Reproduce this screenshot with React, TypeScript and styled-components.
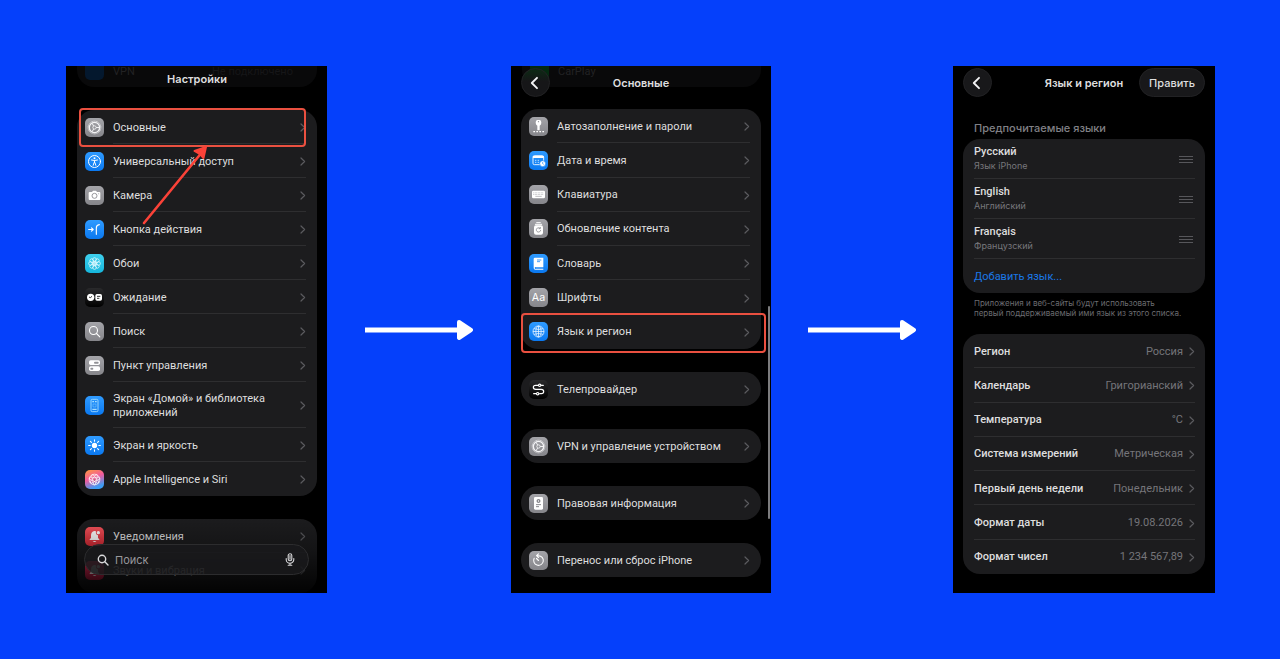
import React from "react";
import styled, { createGlobalStyle } from "styled-components";

const GlobalStyle = createGlobalStyle`
  *, *::before, *::after { box-sizing: border-box; }
  body {
    margin: 0;
    background: #0540fb;
    font-family: Inter, "Liberation Sans", sans-serif;
    -webkit-font-smoothing: antialiased;
  }
`;

const Page = styled.main`
  display: grid;
  grid-template-columns: 261fr 184fr 260fr 182fr 262fr;
  min-height: 100vh;
  padding: 66px 65px 66px 66px;
`;

const Phone = styled.section`
  position: relative;
  display: flex;
  flex-direction: column;
  min-width: 0;
  padding: 0 10px 16px;
  overflow: hidden;
  background: #000;
  color: #dededf;
  font-family: Roboto, sans-serif;
  font-size: 11px;
  line-height: 14px;
`;

const FirstPhone = styled(Phone)`
  padding: 0 10px 0 11px;
`;

const Connector = styled.div`
  display: flex;
  align-items: center;
  justify-content: center;
`;

const PlainHeader = styled.header`
  display: flex;
  justify-content: center;
  height: 44px;
`;

const NavHeader = styled.header`
  display: grid;
  grid-template-columns: 1fr auto 1fr;
  align-items: center;
  height: 43px;
  padding: 2px 0 12px;
`;

const Title = styled.h1`
  position: relative;
  margin: 0;
  font-family: Inter, sans-serif;
  font-size: 11px;
  font-weight: 600;
  line-height: 26px;
`;

const BackButton = styled.button`
  position: relative;
  display: flex;
  align-items: center;
  justify-content: center;
  width: 29px;
  height: 29px;
  padding: 0 2px 0 0;
  border: 1px solid #222224;
  border-radius: 50%;
  background: ${(p: { $tinted?: boolean }) =>
    p.$tinted ? "linear-gradient(#0c2a14, #161618 45%)" : "#18181a"};
`;

const EditButton = styled.button`
  justify-self: end;
  height: 29px;
  padding: 0 9px;
  border: 1px solid #222224;
  border-radius: 15px;
  background: #18181a;
  color: #dededf;
  font: 500 11px/14px Inter, sans-serif;
`;

const GhostCard = styled.div`
  position: absolute;
  top: 0;
  left: 11px;
  right: 10px;
  display: flex;
  gap: 9px;
  height: 21px;
  padding: 0 24px 0 8px;
  border-radius: 0 0 17px 17px;
  background: #09090a;
  color: #222224;
  line-height: 12px;
`;

const GhostValue = styled.span`
  margin-left: auto;
  color: #161618;
`;

const GhostIcon = styled.i`
  width: 19px;
  height: 14px;
  border-radius: 0 0 5px 5px;
  background: ${(p: { $color: string }) => p.$color};
`;

const Card = styled.nav`
  display: flex;
  flex: none;
  flex-direction: column;
  min-height: ${(p: { $min?: number }) => p.$min ?? 34}px;
  border-radius: 17px;
  background: #1c1c1e;

  & + & { margin-top: 23px; }
`;

const FadingCard = styled(Card)`
  flex: 1 0 68px;

  > a { flex-grow: 0; }
`;

const Row = styled.a`
  position: relative;
  display: flex;
  flex: 1 0 ${(p: { $tall?: boolean }) => (p.$tall ? 46 : 34)}px;
  align-items: stretch;
  gap: 9px;
  padding: 0 11px 0 8px;
  color: inherit;
  text-decoration: none;
`;

const RowBody = styled.span`
  display: flex;
  flex: 1;
  align-items: center;
  justify-content: space-between;
  padding-top: 1px;
  box-shadow: inset 0 -1px #2e2e30;

  ${Row}:last-child > & { box-shadow: none; }
`;

const Tile = styled.svg`
  flex: none;
  align-self: center;
  width: 19px;
  height: 19px;
`;

const Highlight = styled.span`
  position: absolute;
  z-index: 1;
  inset: ${(p: { $inset: string }) => p.$inset};
  border: 2px solid #ea5040;
  border-radius: 4px;
`;

const Pointer = styled.svg`
  position: absolute;
  z-index: 2;
  top: 34px;
  left: 62px;
  width: 72px;
  height: 84px;
  pointer-events: none;
`;

const BottomFade = styled.div`
  position: absolute;
  right: 0;
  bottom: 0;
  left: 0;
  height: 76px;
  background: linear-gradient(transparent, rgba(0, 0, 0, 0.3) 45%, rgba(0, 0, 0, 0.9));
  pointer-events: none;
`;

const SearchBar = styled.label`
  position: absolute;
  right: 18px;
  bottom: 18px;
  left: 18px;
  display: flex;
  align-items: center;
  gap: 6px;
  height: 31px;
  padding: 0 13px 0 12px;
  border: 1px solid #2c2c2e;
  border-radius: 16px;
  background: rgba(26, 26, 28, 0.82);

  svg { flex: none; }
`;

const SearchInput = styled.input`
  flex: 1;
  min-width: 0;
  padding: 0;
  border: 0;
  outline: 0;
  background: transparent;
  color: #dededf;
  font: 400 11px/14px Inter, sans-serif;

  &::placeholder { color: #98989c; opacity: 1; }
`;

const ScrollThumb = styled.div`
  position: absolute;
  top: 240px;
  right: 1px;
  width: 2px;
  height: 213px;
  border-radius: 1px;
  background: #7c7c7e;
`;

const SectionLabel = styled.h2`
  margin: 12px 0 4px 11px;
  color: #808086;
  font-family: Inter, sans-serif;
  font-size: 11px;
  font-weight: 500;
  line-height: 14px;
`;

const LanguageList = styled.ul`
  margin: 0;
  padding: 0;
  border-radius: 17px;
  background: #1c1c1e;
  list-style: none;
`;

const Language = styled.li`
  display: flex;
  align-items: center;
  justify-content: space-between;
  height: 40px;
  margin: 0 10px 0 11px;
  padding-right: 2px;
  box-shadow: inset 0 -1px #2e2e30;
  font-weight: 500;

  small {
    display: block;
    color: #77777c;
    font-family: Inter, sans-serif;
    font-size: 9px;
    font-weight: 400;
  }
`;

const AddLanguage = styled.li`
  display: flex;
  height: 34px;
  padding: 1px 0 0 11px;
  align-items: center;

  a { color: #1a78e6; text-decoration: none; }
`;

const Note = styled.p`
  margin: 5px 0 16px 11px;
  color: #6c6c70;
  font-family: Inter, sans-serif;
  font-size: 8px;
  line-height: 10px;
`;

const SettingRow = styled(Row)`
  padding: 0 10px 0 11px;
  font-weight: 500;
`;

const Value = styled.span`
  display: flex;
  align-items: center;
  gap: 6px;
  color: #75757a;
  font-weight: 400;
`;

const Chevron = () => (
  <svg width="6" height="9" viewBox="0 0 6 9" fill="none" stroke="#5b5b5f" strokeWidth="1.2" strokeLinecap="round" strokeLinejoin="round" aria-hidden="true">
    <path d="M1 1l3.6 3.5L1 8" />
  </svg>
);

const BackArrow = () => (
  <svg width="9" height="14" viewBox="0 0 9 14" fill="none" stroke="#f2f2f4" strokeWidth="1.9" strokeLinecap="round" strokeLinejoin="round" aria-hidden="true">
    <path d="M7 1.8L1.8 7 7 12.2" />
  </svg>
);

const Grip = () => (
  <svg width="14" height="9" viewBox="0 0 14 9" stroke="#57575b" aria-hidden="true">
    <path d="M0 1.5h14M0 4.5h14M0 7.5h14" />
  </svg>
);

const Magnifier = () => (
  <svg width="12" height="12" viewBox="0 0 12 12" fill="none" stroke="#d8d8da" strokeWidth="1.4" strokeLinecap="round" aria-hidden="true">
    <circle cx="5" cy="5" r="3.7" />
    <path d="M7.8 7.8l3.2 3.2" />
  </svg>
);

const Microphone = () => (
  <svg width="10" height="13" viewBox="0 0 10 13" fill="none" stroke="#d8d8da" strokeWidth="1.1" strokeLinecap="round" aria-hidden="true">
    <rect x="3.2" y="0.8" width="3.6" height="7" rx="1.8" />
    <path d="M1.2 5.6v.8a3.8 3.8 0 0 0 7.6 0v-.8M5 10.2v2M3.2 12.3h3.6M5 2.6v3.6" />
  </svg>
);

const FlowArrow = () => (
  <svg width="108" height="22" viewBox="0 0 108 22" fill="#fff" aria-hidden="true">
    <path d="M0 8.5h94v5H0z" />
    <path d="M94 3l12 8-12 8z" stroke="#fff" strokeWidth="4" strokeLinejoin="round" />
  </svg>
);

const petals = [0, 45, 90, 135, 180, 225, 270, 315];

const gear = (
  <g fill="none" stroke="#f4f4f6">
    <circle cx="28.5" cy="28.5" r="19" strokeWidth="2.5" strokeDasharray="2.4 1.6" />
    <circle cx="28.5" cy="28.5" r="15.5" strokeWidth="4" />
    <circle cx="28.5" cy="28.5" r="5" strokeWidth="2.6" />
    <path d="M33.5 28.5h10M26 24.2l-5-8.7M26 32.8l-5 8.7" strokeWidth="3" />
  </g>
);

const glyphs: Record<string, React.ReactNode> = {
  gear,
  access: (
    <g fill="none" stroke="#fff" strokeLinecap="round" strokeLinejoin="round">
      <circle cx="28.5" cy="28.5" r="18" strokeWidth="3" />
      <circle cx="28.5" cy="18.5" r="3" fill="#fff" stroke="none" />
      <path d="M19.5 24l9 1.6 9-1.6M28.5 26v6M24.5 40l3-9h2l3 9" strokeWidth="3" />
    </g>
  ),
  camera: (
    <g>
      <path d="M14 18h7l3-4h9l3 4h7q3 0 3 3v18q0 3-3 3H14q-3 0-3-3V21q0-3 3-3z" fill="#fff" />
      <circle cx="28.5" cy="29.5" r="7.5" fill="none" stroke="#97979c" strokeWidth="3" />
      <circle cx="41" cy="23.500" r="1.5" fill="#97979c" />
    </g>
  ),
  action: (
    <g fill="none" stroke="#fff" strokeWidth="3.4" strokeLinecap="round" strokeLinejoin="round">
      <path d="M11 28.5h13M19.5 23.5l5 5-5 5M34 43V24q0-9 9-10" />
    </g>
  ),
  flower: (
    <g fill="none" stroke="#e8fbff" strokeWidth="2.2">
      {petals.map((a) => (
        <circle key={a} cx="28.5" cy="16.500" r="5.500" transform={`rotate(${a} 28.5 28.5)`} />
      ))}
      <circle cx="28.5" cy="28.5" r="6" fill="#e8fbff" fillOpacity="0.7" />
    </g>
  ),
  standby: (
    <g>
      <circle cx="17" cy="28" r="11" fill="#fff" />
      <rect x="31" y="18" width="20" height="20" rx="5" fill="#fff" />
      <path d="M16 29l5-4M16 29l-4-2M36 25h10M36 31h7" fill="none" stroke="#111" strokeWidth="2.6" />
    </g>
  ),
  search: (
    <g fill="none" stroke="#fff" strokeWidth="3.2" strokeLinecap="round">
      <circle cx="25.5" cy="25.5" r="12" />
      <path d="M34.5 34.5l10 10" />
    </g>
  ),
  toggles: (
    <g>
      <rect x="12" y="13" width="33" height="14" rx="5" fill="#fff" />
      <rect x="12" y="31" width="33" height="14" rx="5" fill="#fff" />
      <rect x="27" y="17" width="14" height="6" rx="3" fill="#929297" />
      <rect x="16" y="35" width="9" height="6" rx="3" fill="#929297" />
    </g>
  ),
  phone: (
    <g fill="none" stroke="#a8deff" strokeWidth="2.6">
      <rect x="18" y="10" width="21" height="37" rx="4" />
      <path d="M22 17h5M30 17h5M22 40h13" strokeWidth="3.4" />
      <path d="M24 24h9v9h-9z" strokeWidth="2" strokeOpacity="0.6" />
    </g>
  ),
  sun: (
    <g stroke="#fff" strokeWidth="3.2" strokeLinecap="round">
      <circle cx="28.5" cy="28.5" r="8" fill="#fff" stroke="none" />
      {petals.map((a) => (
        <path key={a} d="M28.5 15.5v-4.5" transform={`rotate(${a} 28.5 28.5)`} />
      ))}
    </g>
  ),
  siri: (
    <g fill="none" stroke="#fff" strokeOpacity="0.85" strokeWidth="2.4">
      <circle cx="28.5" cy="28.5" r="10" fill="#d84a6a" fillOpacity="0.5" stroke="none" />
      {[0, 51, 103, 154, 206, 257, 309].map((a) => (
        <ellipse key={a} cx="28.5" cy="18" rx="9" ry="5.500" transform={`rotate(${a} 28.5 28.5)`} />
      ))}
    </g>
  ),
  bell: (
    <g fill="#fff">
      <path d="M28 12q-10 2-10 13v7l-5 7h31l-5-7v-7q-8-2-6-12-2-1-5-1zM23 42h11q-5 6-11 0z" />
      <circle cx="40" cy="17" r="5" />
    </g>
  ),
  key: (
    <g fill="#fff">
      <path d="M24 9h9q4 2 4 8t-5 9v14h-7V26q-5-3-5-9t4-8z" />
      <circle cx="28.5" cy="14" r="2" fill="#929297" />
      <path d="M13 44h5M22 44h5M31 44h5M40 44h5" stroke="#fff" strokeWidth="4" />
    </g>
  ),
  calendar: (
    <g>
      <rect x="12" y="14" width="32" height="27" rx="4" fill="none" stroke="#fff" strokeWidth="2.6" />
      <path d="M12 18h32" stroke="#fff" strokeWidth="6" />
      <path d="M18 28h4M26 28h4M18 34h4M26 34h4" stroke="#b6dcff" strokeWidth="3" />
      <circle cx="41" cy="38" r="9" fill="#fff" stroke="#1585f8" strokeWidth="2" />
      <path d="M41 33v5l3 2" fill="none" stroke="#1585f8" strokeWidth="2" />
    </g>
  ),
  keyboard: (
    <g>
      <rect x="9" y="17" width="39" height="23" rx="4" fill="#fff" />
      <path d="M13 23.500h31M13 28.500h31" stroke="#a4a4a9" strokeWidth="2.200" strokeDasharray="2.500 2" />
      <path d="M19 34h19" stroke="#a4a4a9" strokeWidth="2.200" />
    </g>
  ),
  refresh: (
    <g>
      <path d="M23 11h11M19 16h19" stroke="#fff" strokeWidth="3" strokeLinecap="round" />
      <rect x="15" y="19" width="27" height="28" rx="6" fill="#fff" />
      <path d="M35 33a6.500 6.500 0 1 1-2-5M34 24v5h-5" fill="none" stroke="#88888d" strokeWidth="2.400" />
    </g>
  ),
  book: (
    <g>
      <path d="M18 11h25v28H20q-3 0-3 3t3 3h23v2H19q-5 0-5-5V15q0-4 4-4z" fill="#fff" />
      <path d="M24 18h13M24 23h9" stroke="#1585f8" strokeWidth="2.400" />
      <path d="M20 42h23" stroke="#d5eaff" strokeWidth="2" />
    </g>
  ),
  fonts: (
    <text x="28.5" y="39" textAnchor="middle" fill="#fff" fontFamily="Inter, sans-serif" fontSize="32">Aa</text>
  ),
  globe: (
    <g fill="none" stroke="#e6f3ff" strokeWidth="2.400">
      <circle cx="28.500" cy="28.500" r="16.500" />
      <ellipse cx="28.500" cy="28.500" rx="8" ry="16.500" />
      <path d="M12 28.500h33M28.500 12v33M15 20q13.500 5 27 0M15 37q13.500-5 27 0" />
    </g>
  ),
  provider: (
    <g fill="none" stroke="#fff" strokeWidth="3.600" strokeLinecap="round">
      <path d="M27 16h-7q-7 0-7 6t7 6h17q7 0 7 6.500t-7 6.500h-5M37 16h6M14 41h7" />
      <circle cx="32" cy="16" r="3.500" />
      <circle cx="26" cy="41" r="3.500" />
    </g>
  ),
  document: (
    <g>
      <rect x="15" y="9" width="27" height="38" rx="4" fill="#fff" />
      <circle cx="28.500" cy="21" r="6" fill="#88888d" />
      <path d="M21 32h15M21 38h9" stroke="#88888d" strokeWidth="3" />
      <path d="M28.500 18v6" stroke="#fff" strokeWidth="2" />
    </g>
  ),
  reset: (
    <g fill="none" stroke="#fff" strokeWidth="3.200" strokeLinecap="round" strokeLinejoin="round">
      <path d="M15.500 22A14.500 14.500 0 1 0 28.500 14H23M28.500 8.500L22.500 14l6 5.500M28.500 28.500l-6-6" />
    </g>
  ),
};

const tileColors: Record<string, [string, string]> = {
  gray: ["#a4a4a9", "#85858a"],
  blue: ["#2f9bff", "#0a78f0"],
  cyan: ["#3fd0ee", "#16b6dc"],
  black: ["#2a2a2c", "#000000"],
  red: ["#f5525a", "#dc2c38"],
  pink: ["#e8315c", "#c01c44"],
};

type IconProps = { glyph: string; color: string };

const Icon = ({ glyph, color }: IconProps) => {
  const id = `tile-${color}-${glyph}`;
  const stops = color === "siri" ? ["#ff9a3c", "#f25a9c", "#3c9cf5"] : tileColors[color];
  const diagonal = color === "siri";
  return (
    <Tile viewBox="0 0 57 57" aria-hidden="true">
      <defs>
        <linearGradient id={id} x1="0" y1="0" x2={diagonal ? "0.4" : "0"} y2="1">
          {stops.map((c, i) => (
            <stop key={c} offset={i / (stops.length - 1)} stopColor={c} />
          ))}
        </linearGradient>
      </defs>
      <rect width="57" height="57" rx="15" fill={`url(#${id})`} />
      {glyphs[glyph]}
    </Tile>
  );
};

type Item = IconProps & { label: React.ReactNode; tall?: boolean };

const ItemRow = ({ item, children }: { item: Item; children?: React.ReactNode }) => (
  <Row href="#" $tall={item.tall}>
    <Icon glyph={item.glyph} color={item.color} />
    <RowBody>
      <span>{item.label}</span>
      <Chevron />
    </RowBody>
    {children}
  </Row>
);

const settings: Item[] = [
  { glyph: "gear", color: "gray", label: "Основные" },
  { glyph: "access", color: "blue", label: "Универсальный доступ" },
  { glyph: "camera", color: "gray", label: "Камера" },
  { glyph: "action", color: "blue", label: "Кнопка действия" },
  { glyph: "flower", color: "cyan", label: "Обои" },
  { glyph: "standby", color: "black", label: "Ожидание" },
  { glyph: "search", color: "gray", label: "Поиск" },
  { glyph: "toggles", color: "gray", label: "Пункт управления" },
  { glyph: "phone", color: "blue", label: <>Экран «Домой» и библиотека<br />приложений</>, tall: true },
  { glyph: "sun", color: "blue", label: "Экран и яркость" },
  { glyph: "siri", color: "siri", label: "Apple Intelligence и Siri" },
];

const general: Item[] = [
  { glyph: "key", color: "gray", label: "Автозаполнение и пароли" },
  { glyph: "calendar", color: "blue", label: "Дата и время" },
  { glyph: "keyboard", color: "gray", label: "Клавиатура" },
  { glyph: "refresh", color: "gray", label: "Обновление контента" },
  { glyph: "book", color: "blue", label: "Словарь" },
  { glyph: "fonts", color: "gray", label: "Шрифты" },
  { glyph: "globe", color: "blue", label: "Язык и регион" },
];

const singles: Item[] = [
  { glyph: "provider", color: "black", label: "Телепровайдер" },
  { glyph: "gear", color: "gray", label: "VPN и управление устройством" },
  { glyph: "document", color: "gray", label: "Правовая информация" },
  { glyph: "reset", color: "gray", label: "Перенос или сброс iPhone" },
];

const languages = [
  ["Русский", "Язык iPhone"],
  ["English", "Английский"],
  ["Français", "Французский"],
];

const regional = [
  ["Регион", "Россия"],
  ["Календарь", "Григорианский"],
  ["Температура", "°C"],
  ["Система измерений", "Метрическая"],
  ["Первый день недели", "Понедельник"],
  ["Формат даты", "19.08.2026"],
  ["Формат чисел", "1 234 567,89"],
];

export default function App() {
  return (
    <>
      <GlobalStyle />
      <Page>
        <FirstPhone>
          <GhostCard>
            <GhostIcon $color="#04182e" />
            <span>VPN</span>
            <GhostValue>Не подключено</GhostValue>
          </GhostCard>
          <PlainHeader>
            <Title>Настройки</Title>
          </PlainHeader>
          <Card>
            {settings.map((item, i) => (
              <ItemRow key={item.glyph} item={item}>
                {i === 0 && (
                  <>
                    <Highlight $inset="-2px 11px -3px 2px" />
                    <Pointer viewBox="0 0 72 84" fill="none" stroke="#fb4238" strokeWidth="2.6" strokeLinecap="round" aria-hidden="true">
                      <path d="M5 79L64 7" />
                      <path d="M67 3l-2.500 11-3-3.500-6-3.500z" fill="#fb4238" strokeWidth="2" strokeLinejoin="round" />
                    </Pointer>
                  </>
                )}
              </ItemRow>
            ))}
          </Card>
          <FadingCard>
            <ItemRow item={{ glyph: "bell", color: "red", label: "Уведомления" }} />
            <ItemRow item={{ glyph: "bell", color: "pink", label: "Звуки и вибрация" }} />
          </FadingCard>
          <BottomFade />
          <SearchBar>
            <Magnifier />
            <SearchInput type="search" placeholder="Поиск" aria-label="Поиск" />
            <Microphone />
          </SearchBar>
        </FirstPhone>

        <Connector><FlowArrow /></Connector>

        <Phone>
          <GhostCard>
            <GhostIcon $color="#042a10" />
            <span>CarPlay</span>
          </GhostCard>
          <NavHeader>
            <BackButton type="button" aria-label="Назад" $tinted><BackArrow /></BackButton>
            <Title>Основные</Title>
          </NavHeader>
          <Card $min={240}>
            {general.map((item) => (
              <ItemRow key={item.glyph} item={item}>
                {item.glyph === "globe" && <Highlight $inset="-2px -5px -4px 0" />}
              </ItemRow>
            ))}
          </Card>
          {singles.map((item) => (
            <Card key={item.glyph}><ItemRow item={item} /></Card>
          ))}
          <ScrollThumb />
        </Phone>

        <Connector><FlowArrow /></Connector>

        <Phone>
          <NavHeader>
            <BackButton type="button" aria-label="Назад"><BackArrow /></BackButton>
            <Title>Язык и регион</Title>
            <EditButton type="button">Править</EditButton>
          </NavHeader>
          <SectionLabel>Предпочитаемые языки</SectionLabel>
          <LanguageList>
            {languages.map(([name, note]) => (
              <Language key={name}>
                <span>{name}<small>{note}</small></span>
                <Grip />
              </Language>
            ))}
            <AddLanguage><a href="#">Добавить язык...</a></AddLanguage>
          </LanguageList>
          <Note>Приложения и веб-сайты будут использовать<br />первый поддерживаемый ими язык из этого списка.</Note>
          <Card $min={240}>
            {regional.map(([label, value]) => (
              <SettingRow href="#" key={label}>
                <RowBody>
                  <span>{label}</span>
                  <Value>{value}<Chevron /></Value>
                </RowBody>
              </SettingRow>
            ))}
          </Card>
        </Phone>
      </Page>
    </>
  );
}
